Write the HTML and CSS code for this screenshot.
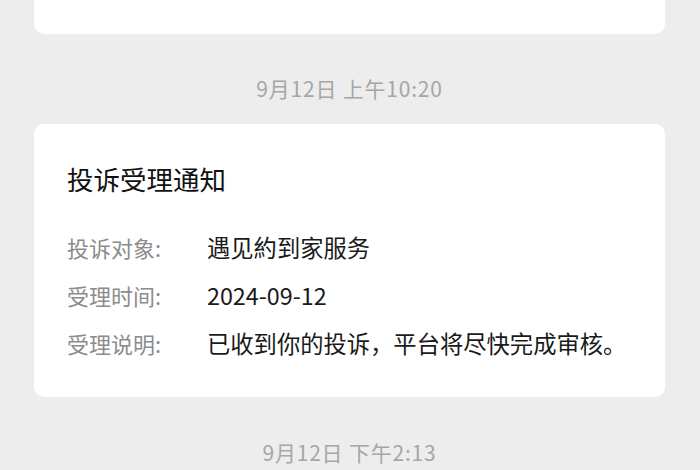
FILE: index.html
```html
<!DOCTYPE html>
<html lang="zh-CN">
<head>
<meta charset="utf-8">
<link rel="stylesheet" href="styles.css">
</head>
<body>
<div class="feed">
  <div class="card card-prev"></div>
  <div class="stamp stamp-first">9月12日 上午10:20</div>
  <div class="card card-main">
    <div class="title">投诉受理通知</div>
    <div class="rows">
      <div class="row"><span class="label">投诉对象:</span><span class="value">遇见約到家服务</span></div>
      <div class="row"><span class="label">受理时间:</span><span class="value">2024-09-12</span></div>
      <div class="row"><span class="label">受理说明:</span><span class="value">已收到你的投诉，平台将尽快完成审核。</span></div>
    </div>
  </div>
  <div class="stamp stamp-second">9月12日 下午2:13</div>
</div>
</body>
</html>
```

FILE: styles.css
```css
html, body {
  margin: 0;
  padding: 0;
  background: #ededed;
  height: 470px;
  overflow: hidden;
}
body {
  font-family: "Noto Sans CJK SC", "Noto Sans", sans-serif;
}
.feed {
  padding: 0 35px 0 34px;
}
.card {
  background: #ffffff;
  border-radius: 10px;
}
.card-prev {
  margin-top: -20px;
  height: 54px;
}
.stamp {
  text-align: center;
  color: #a6a6a6;
  font-size: 21px;
  letter-spacing: 0.8px;
  line-height: 28px;
}
.stamp-first {
  padding-top: 40px;
  padding-bottom: 22px;
}
.stamp-second {
  padding-top: 41px;
}
.card-main {
  padding: 38px 33px 30px 33px;
}
.title {
  font-size: 26.5px;
  line-height: 34px;
  color: #111111;
}
.rows {
  margin-top: 27px;
  display: flex;
  flex-direction: column;
}
.row {
  display: flex;
  line-height: 48px;
  height: 48px;
}
.label {
  width: 140px;
  flex-shrink: 0;
  font-size: 22px;
  color: #8c8c8c;
}
.value {
  font-size: 23.3px;
  color: #1a1a1a;
}
```
